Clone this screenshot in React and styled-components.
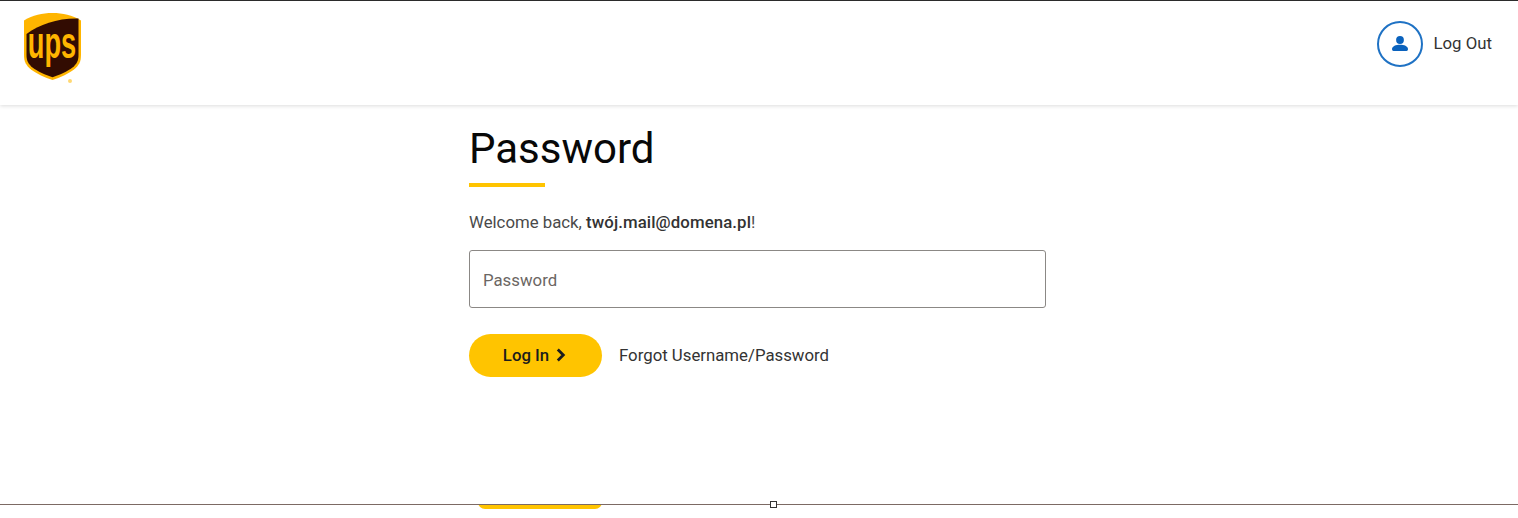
import styled, { createGlobalStyle } from "styled-components";

const GlobalStyle = createGlobalStyle`
  html, body {
    margin: 0;
    padding: 0;
    background: #ffffff;
    font-family: Roboto, "Liberation Sans", sans-serif;
  }
`;

const Page = styled.div`
  height: 518px;
  overflow: hidden;
  display: flex;
  flex-direction: column;
  position: relative;
`;

const Header = styled.header`
  height: 105px;
  flex: none;
  display: flex;
  justify-content: space-between;
  align-items: flex-start;
  box-sizing: border-box;
  border-top: 1px solid #2b2b2b;
  padding: 11px 26px 0 24px;
  box-shadow: 0 1px 4px rgba(0, 0, 0, 0.14);
`;

const UserLink = styled.a`
  display: flex;
  align-items: center;
  gap: 11px;
  margin-top: 9px;
  font-size: 16.800px;
  color: #333333;
`;

const UserLabel = styled.span`
  padding-bottom: 3px;
`;

const UserCircle = styled.span`
  width: 46px;
  height: 46px;
  box-sizing: border-box;
  border: 2px solid #1f72c4;
  border-radius: 50%;
  display: flex;
  align-items: center;
  justify-content: center;
`;

const Main = styled.main`
  flex: 1;
  width: 577px;
  margin-left: 469px;
  display: flex;
  flex-direction: column;
  align-items: flex-start;
`;

const Title = styled.h1`
  margin: 19px 0 0;
  font-size: 42px;
  line-height: 50px;
  font-weight: 400;
  color: #080808;
`;

const Underline = styled.div`
  width: 76px;
  height: 4px;
  margin-top: 9px;
  background: #ffc400;
`;

const Welcome = styled.p`
  margin: 24px 0 0;
  font-size: 16.800px;
  line-height: 22px;
  color: #4a4a4a;

  strong {
    font-weight: 500;
    letter-spacing: 0.1px;
    color: #333333;
  }
`;

const PasswordInput = styled.input`
  width: 100%;
  height: 58px;
  margin-top: 17px;
  box-sizing: border-box;
  padding: 2px 13px 0;
  border: 1px solid #8b8885;
  border-radius: 3px;
  background: #ffffff;
  font-family: inherit;
  font-size: 16.800px;
  outline: none;

  &::placeholder {
    color: #6b6663;
    opacity: 1;
  }
`;

const Actions = styled.div`
  display: flex;
  align-items: center;
  gap: 17px;
  margin-top: 26px;
`;

const LoginButton = styled.button`
  width: 133px;
  height: 43px;
  padding: 0 2px 2px 0;
  display: flex;
  align-items: center;
  justify-content: center;
  gap: 7px;
  border: none;
  border-radius: 22px;
  background: #ffc400;
  font-family: inherit;
  font-size: 16.800px;
  font-weight: 500;
  color: #1c1c1c;
`;

const ForgotLink = styled.a`
  padding-bottom: 2px;
  font-size: 16.800px;
  color: #333333;
`;

// only the bottom sliver of the next button shows under the selection line
const ClipStrip = styled.div`
  height: 4px;
  flex: none;
  margin-bottom: 9px;
  overflow: hidden;
`;

const ClippedButton = styled.div`
  width: 124px;
  height: 44px;
  margin-top: -40px;
  margin-left: 478px;
  border-radius: 7px;
  background: #ffc400;
`;

// selection frame edge from the design tool, sits over the page
const SelectionLine = styled.div`
  position: absolute;
  left: 0;
  right: 0;
  top: 504px;
  height: 1px;
  background: #7c6a64;
`;

const SelectionHandle = styled.div`
  position: absolute;
  left: 770px;
  top: 501px;
  width: 7px;
  height: 7px;
  box-sizing: border-box;
  border: 1px solid #333333;
  background: #ffffff;
`;

const UpsLogo = () => (
  <svg width="58" height="72" viewBox="0 0 58 72">
    <path
      d="M0 8.500C9 3 18 1 28.500 1S48 3 57 8.500V43c0 6.500-2 10.500-7 14.500-5.500 4.300-14 8-21.500 10.500C21 65.500 12.500 61.800 7 57.500 2 53.500 0 49.500 0 43Z"
      fill="#ffb500"
    />
    <path
      d="M54.500 6.500V43c0 5.500-1.700 9-6 12.500-5 4-13 7.300-20 9.700-7-2.400-15-5.700-20-9.700C4.200 52 2.500 48.500 2.500 43V22C16 12 34 6 54.500 6.500Z"
      fill="#320c02"
    />
    <text
      transform="translate(28 46) scale(0.62 1)"
      textAnchor="middle"
      fontFamily="'Liberation Sans', sans-serif"
      fontSize="44"
      fontWeight="700"
      fill="#ffb500"
    >
      ups
    </text>
    <circle cx="46" cy="69" r="2" fill="#ffd873" />
  </svg>
);

const UserIcon = () => (
  <svg width="18" height="18" viewBox="0 0 18 18">
    <circle cx="9" cy="5" r="3.900" fill="#0a62bd" />
    <path
      d="M1 14.200C1 11.200 5 9.800 9 9.800s8 1.400 8 4.400c0 1.300-1 1.800-2.500 1.800h-11C2 16 1 15.500 1 14.200Z"
      fill="#0a62bd"
    />
  </svg>
);

const Chevron = () => (
  <svg width="10" height="14" viewBox="0 0 10 14">
    <path
      d="M1.800 1.500 7.300 7 1.800 12.500"
      fill="none"
      stroke="#1c1c1c"
      strokeWidth="2.800"
    />
  </svg>
);

const App = () => {
  return (
    <>
      <GlobalStyle />
      <Page>
        <Header>
          <UpsLogo />
          <UserLink>
            <UserCircle>
              <UserIcon />
            </UserCircle>
            <UserLabel>Log Out</UserLabel>
          </UserLink>
        </Header>
        <Main>
          <Title>Password</Title>
          <Underline />
          <Welcome>
            Welcome back, <strong>twój.mail@domena.pl</strong>!
          </Welcome>
          <PasswordInput type="password" placeholder="Password" />
          <Actions>
            <LoginButton>
              Log In <Chevron />
            </LoginButton>
            <ForgotLink>Forgot Username/Password</ForgotLink>
          </Actions>
        </Main>
        <ClipStrip>
          <ClippedButton />
        </ClipStrip>
        <SelectionLine />
        <SelectionHandle />
      </Page>
    </>
  );
};

export default App;
